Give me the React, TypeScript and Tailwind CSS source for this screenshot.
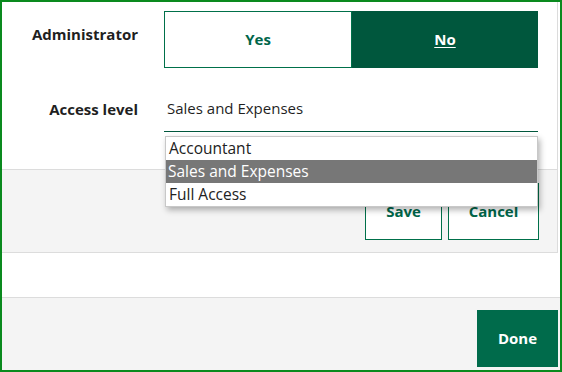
import React from "react";

export default function App() {
  const font = { fontFamily: '"Open Sans", "Noto Sans", sans-serif' };
  return (
    <div
      className="w-[562px] h-[372px] border-2 border-[#0a8a1e] bg-white flex flex-col overflow-hidden text-[#1f1f1f]"
      style={font}
    >
      {/* card */}
      <div className="w-[556px] border-r border-[#dcdcdc] flex flex-col">
        <div className="pt-[9px] pr-[18px] flex flex-col">
          {/* Administrator row */}
          <div className="flex">
            <div className="w-[136px] text-right font-bold text-[15px] leading-[20px] pt-[13px]">
              Administrator
            </div>
            <div className="ml-[26px] flex w-[374px] h-[57px]">
              <button className="flex-1 border border-[#00704a] bg-white text-[#00664a] font-bold text-[15px] flex items-center justify-center">
                Yes
              </button>
              <button className="flex-1 bg-[#00573d] text-white font-bold text-[15px] underline underline-offset-2 flex items-center justify-center">
                No
              </button>
            </div>
          </div>
          {/* Access level row */}
          <div className="flex mt-[20px]">
            <div className="w-[136px] text-right font-bold text-[15px] leading-[20px] pt-[11px]">
              Access level
            </div>
            <div className="ml-[26px] w-[374px] h-[44px] relative border-b border-[#00573d]">
              <div className="pl-[3px] pt-[8px] text-[15px] leading-[24px]">Sales and Expenses</div>
              <div className="absolute left-[1px] top-[48px] w-[373px] bg-white border border-[#c8c8c8] shadow-[2px_3px_6px_rgba(0,0,0,0.3)] z-10 text-[15.5px]">
                <div className="h-[23px] leading-[23px] pl-[3px] text-[#222]">Accountant</div>
                <div className="h-[23px] leading-[23px] pl-[2px] bg-[#777777] text-white">Sales and Expenses</div>
                <div className="h-[23px] leading-[23px] pl-[3px] text-[#222]">Full Access</div>
              </div>
            </div>
          </div>
        </div>
        {/* card footer */}
        <div className="mt-[37px] h-[84px] bg-[#f4f4f4] border-t border-b border-[#dcdcdc] flex justify-end items-start gap-[6px] pt-[13px] pr-[18px]">
          <button className="w-[77px] h-[57px] border border-[#00704a] bg-white text-[#00664a] font-bold text-[15px] flex items-center justify-center">
            Save
          </button>
          <button className="w-[91px] h-[57px] border border-[#00704a] bg-white text-[#00664a] font-bold text-[15px] flex items-center justify-center">
            Cancel
          </button>
        </div>
      </div>
      <div className="h-[44px]" />
      {/* page footer */}
      <div className="flex-1 bg-[#f4f4f4] border-t border-[#dcdcdc] flex justify-end items-start pt-[12px] pr-[2px]">
        <button className="w-[81px] h-[57px] bg-[#006b4b] text-white font-bold text-[15px] flex items-center justify-center">
          Done
        </button>
      </div>
    </div>
  );
}
